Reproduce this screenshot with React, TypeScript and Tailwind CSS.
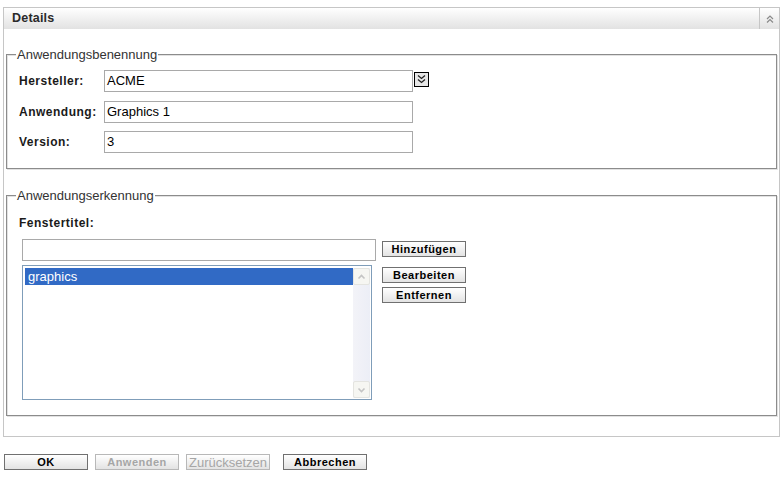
import React from "react";

const Btn: React.FC<{ label: string; disabled?: boolean; plain?: boolean }> = ({ label, disabled, plain }) => (
    <button
        type="button"
        className={
            "w-[84px] h-[16px] border flex items-center justify-center leading-none bg-linear-to-b from-white to-[#e3e3e3] " +
            (disabled ? "border-[#b8b8b8] text-[#a6a6a6] " : "border-[#707070] text-black ") +
            (plain ? "text-[13px] font-normal" : "text-[11px] font-bold tracking-[0.5px]")
        }
    >
        {label}
    </button>
);

const Field: React.FC<{ label: string; value: string; dropdown?: boolean; className?: string }> = ({ label, value, dropdown, className }) => (
    <div className={"flex items-center " + (className ?? "")}>
        <span className="w-[85px] text-[12px] font-bold tracking-[0.5px] text-[#1a1a1a]">{label}</span>
        <div className="w-[309px] h-[22px] border border-[#a9a9a9] px-[2px] flex items-center text-[13px] text-black">{value}</div>
        {dropdown && (
            <div className="self-start mt-[2px] ml-[1px] w-[15px] h-[15px] border border-black bg-[#e6e6e6] flex items-center justify-center">
                <svg width="11" height="11" viewBox="0 0 11 11" fill="none" stroke="#222" strokeWidth="1.3">
                    <path d="M2 1.5 L5.5 4.5 L9 1.5" />
                    <path d="M2 5.5 L5.5 8.5 L9 5.5" />
                </svg>
            </div>
        )}
    </div>
);

const fieldsetCls = "border border-[#8c8c8c] shadow-[inset_1px_1px_0_#e2e2e2,1px_1px_0_#e2e2e2]";
const legendCls = "ml-[9px] px-[1px] bg-white text-[13px] leading-[15px] text-[#333]";

export default function App() {
    return (
        <div className="w-[783px] h-[477px] bg-white pt-[7px] pl-[3px] font-['Liberation_Sans',Arial,sans-serif]">
            <div className="w-[777px] h-[430px] border border-[#c6c6c6] flex flex-col">
                {/* header */}
                <div className="h-[21px] flex items-stretch justify-between bg-linear-to-b from-white to-[#e2e2e2]">
                    <span className="pl-[8px] flex items-center text-[12.5px] font-bold tracking-[0.2px] text-[#2a2a2a]">Details</span>
                    <div className="w-[20px] border-l border-[#c6c6c6] flex items-center justify-center">
                        <svg width="10" height="10" viewBox="0 0 10 10" fill="none" stroke="#8a8a8a" strokeWidth="1.2">
                            <path d="M2 5 L5 2 L8 5" />
                            <path d="M2 8.5 L5 5.5 L8 8.5" />
                        </svg>
                    </div>
                </div>

                <div className="px-[2px] pt-[18px]">
                    {/* Anwendungsbenennung */}
                    <fieldset className={fieldsetCls + " pt-[8px] pb-[15px]"}>
                        <legend className={legendCls}>Anwendungsbenennung</legend>
                        <div className="pl-[12px]">
                            <Field label="Hersteller:" value="ACME" dropdown />
                            <Field label="Anwendung:" value="Graphics 1" className="mt-[9px]" />
                            <Field label="Version:" value="3" className="mt-[8px]" />
                        </div>
                    </fieldset>

                    {/* Anwendungserkennung */}
                    <fieldset className={fieldsetCls + " mt-[19px] pt-[13px] pb-[15px]"}>
                        <legend className={legendCls}>Anwendungserkennung</legend>
                        <div className="pl-[12px] text-[12px] leading-[15px] font-bold tracking-[0.5px] text-[#1a1a1a]">Fenstertitel:</div>
                        <div className="pl-[15px] mt-[8px]">
                            <div className="flex items-start">
                                <div className="w-[354px] h-[22px] border border-[#a9a9a9]" />
                                <div className="ml-[6px] mt-[2px]">
                                    <Btn label="Hinzufügen" />
                                </div>
                            </div>
                            <div className="flex items-start mt-[4px]">
                                <div className="w-[350px] h-[135px] border border-[#7f9db9] p-[1px] flex">
                                    <div className="flex-1 pt-[1px] pl-[1px]">
                                        <div className="h-[17px] bg-[#316ac5] text-white text-[13px] leading-[17px] pl-[3px]">graphics</div>
                                    </div>
                                    <div className="w-[17px] mt-[1px] bg-linear-to-r from-[#f3f3f8] to-[#eceef6] flex flex-col justify-between">
                                        <div className="h-[17px] border border-[#e4e4e0] rounded-[2px] bg-[#f6f6f2] flex items-center justify-center">
                                            <svg width="9" height="6" viewBox="0 0 9 6" fill="none" stroke="#c4c4c4" strokeWidth="1.6">
                                                <path d="M1.5 4.5 L4.5 1.5 L7.5 4.5" />
                                            </svg>
                                        </div>
                                        <div className="h-[17px] border border-[#e4e4e0] rounded-[2px] bg-[#f6f6f2] flex items-center justify-center">
                                            <svg width="9" height="6" viewBox="0 0 9 6" fill="none" stroke="#c4c4c4" strokeWidth="1.6">
                                                <path d="M1.5 1.5 L4.5 4.5 L7.5 1.5" />
                                            </svg>
                                        </div>
                                    </div>
                                </div>
                                <div className="ml-[10px] mt-[2px] flex flex-col gap-[4px]">
                                    <Btn label="Bearbeiten" />
                                    <Btn label="Entfernen" />
                                </div>
                            </div>
                        </div>
                    </fieldset>
                </div>
            </div>

            {/* footer buttons */}
            <div className="mt-[17px] ml-[1px] flex items-center">
                <Btn label="OK" />
                <div className="ml-[7px]"><Btn label="Anwenden" disabled /></div>
                <div className="ml-[7px]"><Btn label="Zurücksetzen" disabled plain /></div>
                <div className="ml-[13px]"><Btn label="Abbrechen" /></div>
            </div>
        </div>
    );
}
